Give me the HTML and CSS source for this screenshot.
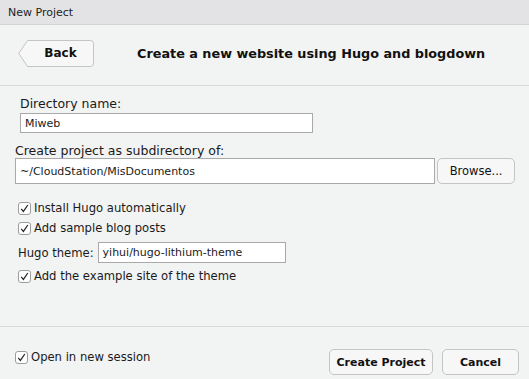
FILE: index.html
```html
<!DOCTYPE html>
<html>
<head>
<meta charset="utf-8">
<link rel="stylesheet" href="styles.css">
</head>
<body>
<div class="win">
  <div class="titlebar">New Project</div>
  <div class="header">
    <button class="back">
      <svg class="back-bg" width="76" height="27" viewBox="0 0 76 27"><path d="M9.5 0.5 H72.5 Q75.5 0.5 75.5 3.5 V23.5 Q75.5 26.5 72.5 26.5 H9.5 L0.8 13.5 Z" fill="#f7f7f8" stroke="#c4c4c6"/></svg>
      <span class="back-label">Back</span>
    </button>
    <div class="heading">Create a new website using Hugo and blogdown</div>
  </div>
  <div class="form">
    <div class="field-label indent">Directory name:</div>
    <div class="input name-input indent">Miweb</div>
    <div class="field-label">Create project as subdirectory of:</div>
    <div class="row">
      <div class="input path-input">~/CloudStation/MisDocumentos</div>
      <button class="btn browse">Browse...</button>
    </div>
    <div class="options">
      <label class="check"><span class="box"><svg width="13" height="13" viewBox="0 0 13 13"><path d="M3.2 6.8 L5.4 9.4 L9.8 3" fill="none" stroke="#222" stroke-width="1.2"/></svg></span>Install Hugo automatically</label>
      <label class="check"><span class="box"><svg width="13" height="13" viewBox="0 0 13 13"><path d="M3.2 6.8 L5.4 9.4 L9.8 3" fill="none" stroke="#222" stroke-width="1.2"/></svg></span>Add sample blog posts</label>
      <div class="theme-row"><span>Hugo theme:</span><div class="input theme-input">yihui/hugo-lithium-theme</div></div>
      <label class="check"><span class="box"><svg width="13" height="13" viewBox="0 0 13 13"><path d="M3.2 6.8 L5.4 9.4 L9.8 3" fill="none" stroke="#222" stroke-width="1.2"/></svg></span>Add the example site of the theme</label>
    </div>
  </div>
  <div class="footer">
    <label class="check session"><span class="box"><svg width="13" height="13" viewBox="0 0 13 13"><path d="M3.2 6.8 L5.4 9.4 L9.8 3" fill="none" stroke="#222" stroke-width="1.2"/></svg></span>Open in new session</label>
    <div class="actions">
      <button class="btn create">Create Project</button>
      <button class="btn cancel">Cancel</button>
    </div>
  </div>
</div>
</body>
</html>
```
FILE: styles.css
```css
html, body {
  margin: 0;
  padding: 0;
}
body {
  font-family: "DejaVu Sans", "Liberation Sans", sans-serif;
  font-size: 12px;
  color: #1a1a1a;
  background: #f2f3f3;
}
.win {
  width: 529px;
  height: 379px;
  display: flex;
  flex-direction: column;
  overflow: hidden;
}
.titlebar {
  height: 25px;
  box-sizing: border-box;
  background: #e3e3e6;
  border-bottom: 1px solid #d2d2d4;
  padding: 6px 0 0 8px;
  font-size: 11px;
  color: #222;
}
.header {
  height: 61px;
  box-sizing: border-box;
  border-bottom: 1px solid #d9d9db;
  display: flex;
  align-items: center;
  padding: 0 0 4px 18px;
}
.back {
  position: relative;
  width: 76px;
  height: 27px;
  border: none;
  background: none;
  padding: 0 0 0 9px;
  font: inherit;
  cursor: default;
}
.back-bg {
  position: absolute;
  left: 0;
  top: 0;
}
.back-label {
  position: relative;
  font-weight: bold;
  font-size: 12px;
  color: #111;
}
.heading {
  margin-left: 43px;
  font-weight: bold;
  font-size: 12.8px;
  color: #111;
}
.form {
  flex: 1;
  padding: 10px 14px 0 15px;
  display: flex;
  flex-direction: column;
}
.indent {
  margin-left: 5px;
}
.field-label {
  font-size: 12.5px;
  height: 16px;
  line-height: 16px;
}
.input {
  background: #fff;
  border: 1px solid #a9a9a9;
  box-sizing: border-box;
  font-size: 11px;
  padding-left: 4px;
  display: flex;
  align-items: center;
}
.name-input {
  width: 293px;
  height: 20px;
  margin-top: 1px;
  margin-bottom: 10px;
}
.row {
  display: flex;
  align-items: center;
  margin-top: -1px;
}
.path-input {
  width: 421px;
  height: 26px;
}
.btn {
  background: #f7f7f8;
  border: 1px solid #c4c4c6;
  border-radius: 5px;
  font-family: inherit;
  font-size: 11.5px;
  color: #111;
  height: 26px;
  padding: 0;
  cursor: default;
}
.browse {
  width: 78px;
  margin-left: 2px;
}
.options {
  margin-top: 17px;
  margin-left: 3px;
  display: flex;
  flex-direction: column;
  gap: 6px;
}
.check {
  display: flex;
  align-items: center;
  font-size: 11.6px;
  height: 14px;
}
.box {
  width: 13px;
  height: 13px;
  box-sizing: border-box;
  border: 1px solid #9d9d9f;
  border-radius: 3px;
  background: #fff;
  margin-right: 3px;
  position: relative;
}
.box svg {
  position: absolute;
  left: -1px;
  top: -1px;
}
.theme-row {
  display: flex;
  align-items: center;
  font-size: 11.6px;
  margin-top: 1px;
}
.theme-input {
  width: 188px;
  height: 21px;
  margin-left: 4px;
}
.footer {
  height: 53px;
  box-sizing: border-box;
  border-top: 1px solid #d9d9db;
  display: flex;
  align-items: flex-start;
  padding: 22px 10px 0 15px;
  justify-content: space-between;
}
.session {
  margin-top: 1px;
}
.actions {
  display: flex;
  gap: 9px;
}
.btn.create {
  width: 104px;
  font-weight: bold;
  font-size: 11px;
}
.btn.cancel {
  width: 77px;
  font-weight: bold;
  font-size: 11px;
}
```
